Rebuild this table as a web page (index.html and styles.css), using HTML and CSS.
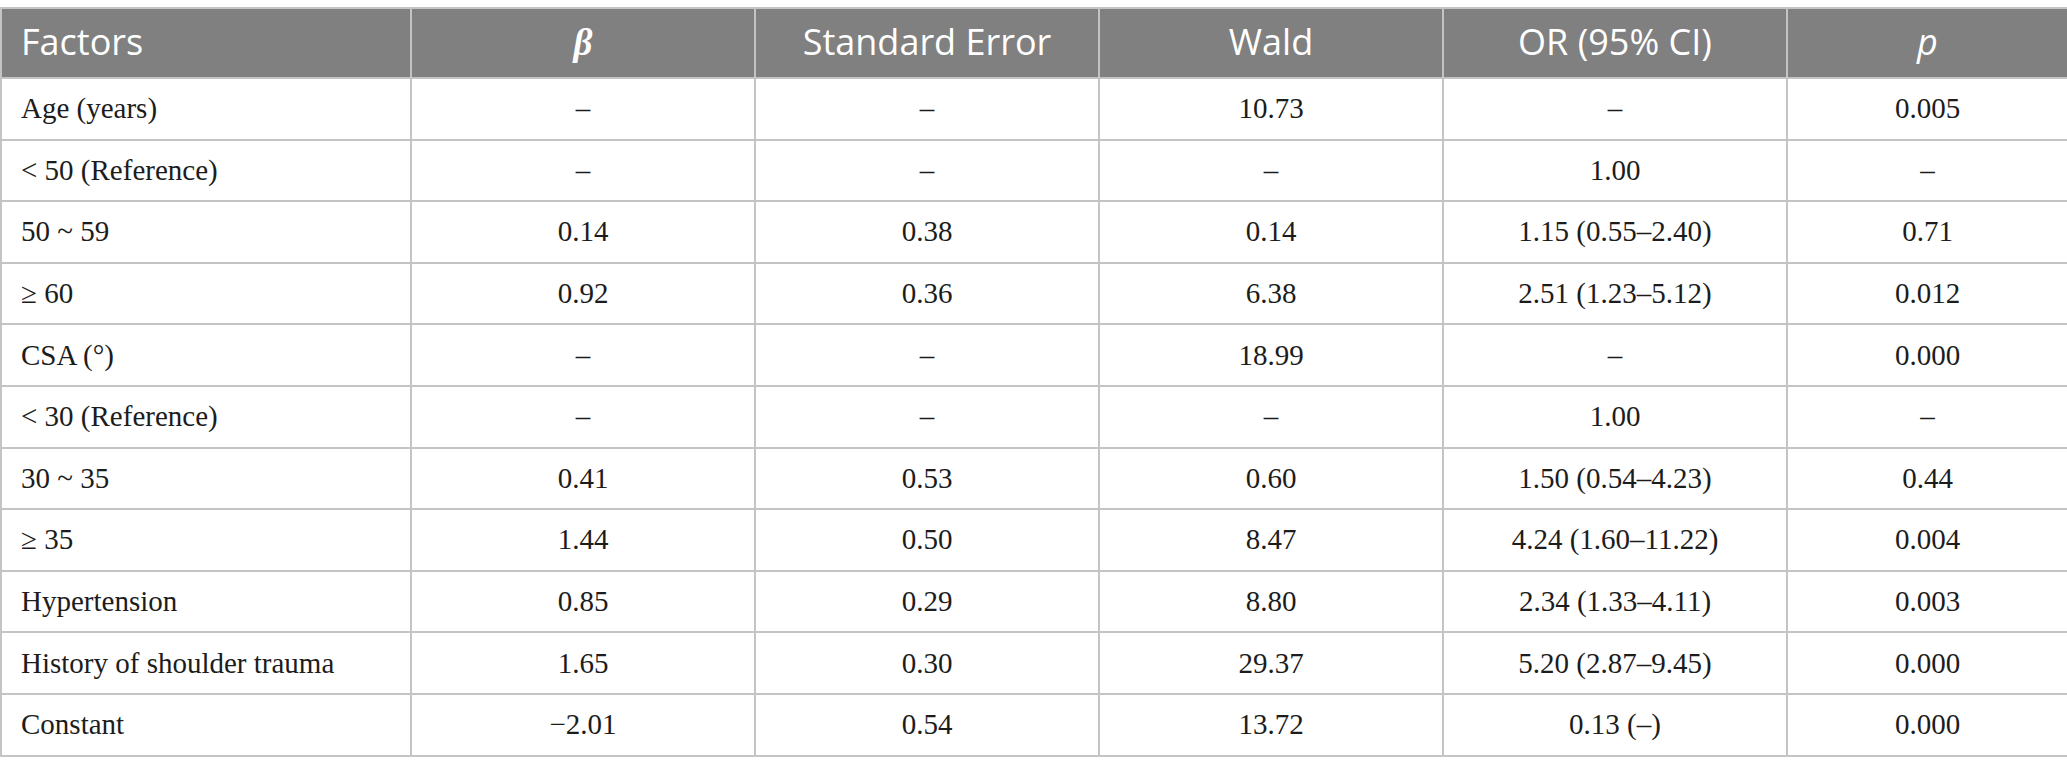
FILE: index.html
```html
<!DOCTYPE html>
<html lang="en">
<head>
<meta charset="utf-8">
<title>Logistic regression</title>
<link rel="stylesheet" href="styles.css">
</head>
<body>
<table class="data">
  <colgroup>
    <col class="c1"><col class="cn"><col class="cn"><col class="cn"><col class="cn"><col class="c6">
  </colgroup>
  <thead>
    <tr>
      <th class="first">Factors</th>
      <th><span class="beta">β</span></th>
      <th>Standard Error</th>
      <th>Wald</th>
      <th>OR (95% CI)</th>
      <th><span class="pit">p</span></th>
    </tr>
  </thead>
  <tbody>
    <tr><td>Age (years)</td><td>–</td><td>–</td><td>10.73</td><td>–</td><td>0.005</td></tr>
    <tr><td>&lt; 50 (Reference)</td><td>–</td><td>–</td><td>–</td><td>1.00</td><td>–</td></tr>
    <tr><td>50 ~ 59</td><td>0.14</td><td>0.38</td><td>0.14</td><td>1.15 (0.55–2.40)</td><td>0.71</td></tr>
    <tr><td>≥ 60</td><td>0.92</td><td>0.36</td><td>6.38</td><td>2.51 (1.23–5.12)</td><td>0.012</td></tr>
    <tr><td>CSA (°)</td><td>–</td><td>–</td><td>18.99</td><td>–</td><td>0.000</td></tr>
    <tr><td>&lt; 30 (Reference)</td><td>–</td><td>–</td><td>–</td><td>1.00</td><td>–</td></tr>
    <tr><td>30 ~ 35</td><td>0.41</td><td>0.53</td><td>0.60</td><td>1.50 (0.54–4.23)</td><td>0.44</td></tr>
    <tr><td>≥ 35</td><td>1.44</td><td>0.50</td><td>8.47</td><td>4.24 (1.60–11.22)</td><td>0.004</td></tr>
    <tr><td>Hypertension</td><td>0.85</td><td>0.29</td><td>8.80</td><td>2.34 (1.33–4.11)</td><td>0.003</td></tr>
    <tr><td>History of shoulder trauma</td><td>1.65</td><td>0.30</td><td>29.37</td><td>5.20 (2.87–9.45)</td><td>0.000</td></tr>
    <tr><td>Constant</td><td>−2.01</td><td>0.54</td><td>13.72</td><td>0.13 (–)</td><td>0.000</td></tr>
  </tbody>
</table>
</body>
</html>
```

FILE: styles.css
```css
html, body {
  margin: 0;
  padding: 0;
  background: #ffffff;
}

body {
  padding-top: 7px;
}

.data {
  width: 2067px;
  border-collapse: collapse;
  table-layout: fixed;
  font-family: "Liberation Serif", "Times New Roman", serif;
  color: #1c1c1c;
}

.c1 { width: 410px; }
.cn { width: 344px; }
.c6 { width: 281px; }

.data th,
.data td {
  border: 2px solid #c4c4c4;
  text-align: center;
  vertical-align: middle;
  padding: 0 19px;
  white-space: nowrap;
}

.data thead tr {
  height: 70px;
}

.data th {
  background: #7f807f;
  color: #ffffff;
  font-family: "Open Sans", "Noto Sans", sans-serif;
  font-weight: 400;
  font-size: 36px;
  padding-bottom: 3px;
}

.data th.first,
.data td:first-child {
  text-align: left;
}

.data tbody tr {
  height: 61.6px;
}

.data td {
  font-size: 29px;
}

.beta {
  font-family: "Liberation Serif", serif;
  font-style: italic;
  font-weight: 700;
  font-size: 37px;
}

.pit {
  font-style: italic;
}
```
